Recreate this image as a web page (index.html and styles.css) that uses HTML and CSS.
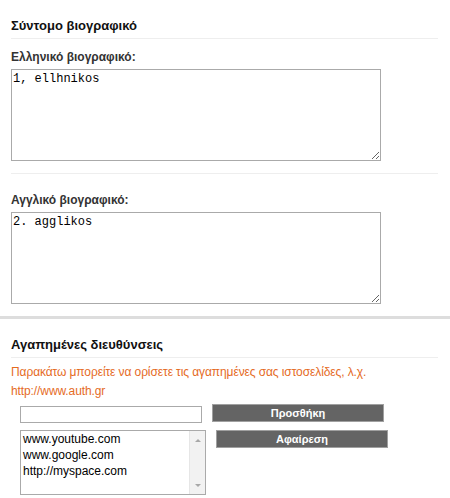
FILE: index.html
```html
<!DOCTYPE html>
<html lang="el">
<head>
    <meta charset="UTF-8">
    <title>Προφίλ</title>
    <link rel="stylesheet" href="styles.css">
</head>
<body>
    <div class="section">
        <h2>Σύντομο βιογραφικό</h2>

        <label class="field-label" for="bio-el">Ελληνικό βιογραφικό:</label>
        <textarea id="bio-el" class="bio">1, ellhnikos</textarea>

        <hr class="thin">

        <label class="field-label second" for="bio-en">Αγγλικό βιογραφικό:</label>
        <textarea id="bio-en" class="bio">2. agglikos</textarea>
    </div>

    <div class="bar"></div>

    <div class="section">
        <h2>Αγαπημένες διευθύνσεις</h2>
        <p class="hint">Παρακάτω μπορείτε να ορίσετε τις αγαπημένες σας ιστοσελίδες, λ.χ. http://www.auth.gr</p>

        <div class="links-form">
            <div class="row">
                <input type="text" class="url-input">
                <button type="button" class="dark-btn">Προσθήκη</button>
            </div>
            <div class="row">
                <div class="listbox">
                    <ul class="list-items">
                        <li>www.youtube.com</li>
                        <li>www.google.com</li>
                        <li>http://myspace.com</li>
                    </ul>
                    <div class="scroll-track">
                        <span class="arrow up"></span>
                        <span class="arrow down"></span>
                    </div>
                </div>
                <button type="button" class="dark-btn remove">Αφαίρεση</button>
            </div>
        </div>
    </div>
</body>
</html>
```

FILE: styles.css
```css
body { margin: 0; background-color: #fff; font-family: "Liberation Sans", Arial, sans-serif; font-size: 12px; color: #000; }
.section { padding: 0 12px 0 11px; }
h2 { margin: 0; padding: 17px 0 4px; font-size: 13px; line-height: 17px; font-weight: bold; color: #111; border-bottom: 1px solid #eee; }
.field-label { display: block; margin-top: 11px; font-size: 12px; line-height: 15px; font-weight: bold; color: #333; }
.field-label.second { margin-top: 19px; }
.bio { display: block; box-sizing: border-box; width: 370px; height: 92px; margin: 4px 0 0; padding: 2px 1px; border: 1px solid #aaa; font-family: "Liberation Mono", "Courier New", monospace; font-size: 12px; line-height: 14px; color: #000; }
hr.thin { margin: 12px 0 0; border: none; border-top: 1px solid #eee; height: 0; }
.bar { height: 3px; margin-top: 12px; background-color: #ddd; }
.hint { margin: 5px 0 0; line-height: 19px; color: #e56b1f; letter-spacing: -0.1px; }
.links-form { margin: 3px 0 0 9px; display: flex; flex-direction: column; gap: 7px; }
.row { display: flex; align-items: flex-start; }
.url-input { box-sizing: border-box; width: 182px; height: 17px; margin: 2px 10px 0 0; padding: 0 2px; border: 1px solid #aaa; font-size: 12px; }
.dark-btn { box-sizing: border-box; width: 172px; height: 18px; padding: 0; border: 1px solid #a0a0a0; background-color: #646464; color: #fff; font-family: "Liberation Sans", Arial, sans-serif; font-size: 11px; font-weight: bold; line-height: 16px; }
.listbox { box-sizing: border-box; width: 186px; height: 65px; margin-right: 10px; border: 1px solid #aaa; display: flex; }
.list-items { flex: 1; margin: 0; padding: 0 0 0 2px; list-style: none; line-height: 16px; }
.scroll-track { width: 16px; background-color: #f2f2f2; border-left: 1px solid #e6e6e6; display: flex; flex-direction: column; justify-content: space-between; align-items: center; padding: 8px 0 7px; box-sizing: border-box; }
.arrow { width: 0; height: 0; border-left: 3px solid transparent; border-right: 3px solid transparent; }
.arrow.up { border-bottom: 3px solid #a8a8a8; }
.arrow.down { border-top: 3px solid #a8a8a8; }
```
